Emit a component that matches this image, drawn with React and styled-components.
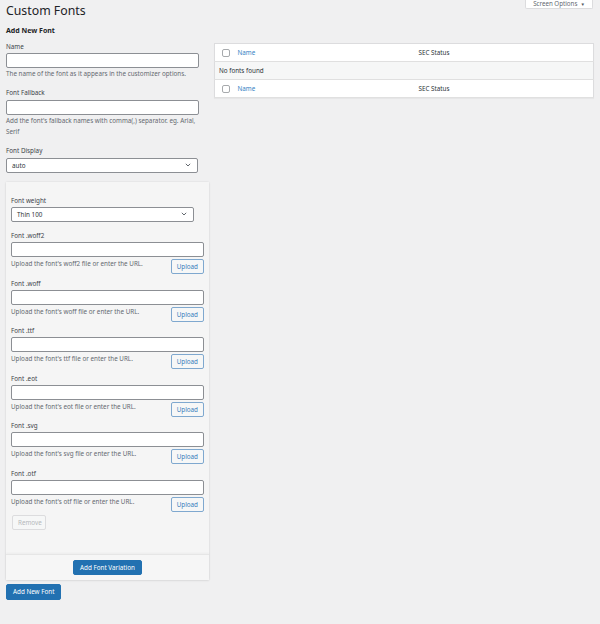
import React from 'react';
import styled, { createGlobalStyle } from 'styled-components';

const GlobalStyle = createGlobalStyle`
  html, body {
    margin: 0;
    padding: 0;
    background: #f0f0f1;
  }
  body {
    font-family: "Noto Sans", "Open Sans", sans-serif;
    font-size: 6.3px;
    color: #3c434a;
  }
  * {
    box-sizing: border-box;
  }
`;

const Page = styled.div`
  padding: 0 6px;
  min-height: 624px;
`;

const Header = styled.div`
  display: flex;
  justify-content: space-between;
  align-items: flex-start;
  height: 22px;
`;

const Title = styled.h1`
  margin: 0;
  font-size: 12.3px;
  line-height: 22px;
  font-weight: 400;
  color: #1d2327;
`;

const ScreenTab = styled.div`
  display: flex;
  align-items: flex-end;
  justify-content: center;
  gap: 3px;
  height: 9px;
  width: 68px;
  padding: 0 4px 1px;
  margin-right: 1px;
  background: #fff;
  border: 1px solid #dcdcde;
  border-top: none;
  border-radius: 0 0 2px 2px;
  color: #646970;
  font-size: 6.2px;
  line-height: 6px;
  white-space: nowrap;
  overflow: hidden;
`;

const Caret = styled.span`
  font-size: 4.5px;
  color: #50575e;
`;

const Columns = styled.div`
  display: flex;
  gap: 5px;
  align-items: flex-start;
`;

const LeftCol = styled.div`
  width: 203px;
  flex: none;
`;

const RightCol = styled.div`
  flex: 1;
  margin-top: 21px;
`;

const SectionTitle = styled.h2`
  margin: 3px 0 0;
  font-size: 7px;
  line-height: 12px;
  font-weight: 700;
  color: #1d2327;
`;

const Field = styled.div`
  margin-top: ${(p) => p.$top || 9}px;
`;

const Label = styled.label`
  display: block;
  line-height: 10px;
  color: #3c434a;
  margin-bottom: ${(p) => p.$gap || 1}px;
`;

const TextInput = styled.input`
  display: block;
  width: ${(p) => p.$width || 193}px;
  height: 15px;
  margin: 0;
  padding: 0 5px;
  background: #fff;
  border: 1px solid #8c8f94;
  border-radius: 2px;
  font: inherit;
  outline: none;
`;

const SelectBox = styled.div`
  display: flex;
  align-items: center;
  justify-content: space-between;
  width: ${(p) => p.$width || 192}px;
  height: 15px;
  padding: 0 6px 0 5px;
  background: #fff;
  border: 1px solid #8c8f94;
  border-radius: 2px;
  color: #2c3338;
`;

const Description = styled.p`
  margin: ${(p) => p.$top || 1}px 0 0;
  line-height: 10.3px;
  color: #646970;
`;

const Panel = styled.div`
  margin-top: 9px;
  background: #f5f5f5;
  box-shadow: 0 0 2px rgba(0, 0, 0, 0.1), 0 1px 2px rgba(0, 0, 0, 0.06);
`;

const PanelBody = styled.div`
  padding: 14px 5px 24px;
`;

const UploadGroup = styled.div`
  margin-top: ${(p) => p.$first ? 9.5 : 4.5}px;
`;

const UploadRow = styled.div`
  display: flex;
  justify-content: space-between;
  align-items: flex-start;
  margin-top: 2px;
  width: 193px;
`;

const UploadHint = styled.span`
  line-height: 10px;
  color: #646970;
`;

const SecondaryButton = styled.button`
  height: 15px;
  padding: 0 5px;
  margin: 0;
  background: #f6f7f7;
  border: 1px solid #7fa8cf;
  border-radius: 2px;
  color: #3a7dbb;
  font: inherit;
  line-height: 13px;
  cursor: pointer;
`;

const RemoveButton = styled(SecondaryButton)`
  margin-top: 3px;
  margin-left: 1px;
  width: 34px;
  border-color: #dcdcde;
  color: #b5b8bb;
  cursor: default;
`;

const PanelFooter = styled.div`
  display: flex;
  justify-content: center;
  padding: 5px 0;
  background: #f6f6f6;
  border-top: 1px solid #e6e6e6;
  box-shadow: 0 -1px 2px rgba(0, 0, 0, 0.04);
`;

const PrimaryButton = styled.button`
  height: ${(p) => p.$height || 15}px;
  padding: 0 6px;
  margin: 0;
  background: #2271b1;
  border: 1px solid #2271b1;
  border-radius: 2px;
  color: #fff;
  font: inherit;
  cursor: pointer;
`;

const SubmitWrap = styled.div`
  margin-top: 4px;
`;

const Table = styled.table`
  width: 100%;
  border-collapse: collapse;
  background: #fff;
  border: 1px solid #dcdcde;
  box-shadow: 0 1px 1px rgba(0, 0, 0, 0.04);
`;

const Row = styled.tr`
  height: 18px;
  background: ${(p) => p.$striped ? '#f6f7f7' : '#fff'};
  border-bottom: 1px solid #e0e0e0;
`;

const CheckCell = styled.td`
  width: 23px;
  padding: 0 0 0 7px;
  vertical-align: middle;
`;

const Cell = styled.td`
  padding: 0 0 0 ${(p) => p.$pad || 0}px;
  width: ${(p) => p.$width ? `${p.$width}px` : 'auto'};
  vertical-align: middle;
  line-height: 10px;
  color: #2c3338;
`;

const Checkbox = styled.span`
  display: block;
  width: 8px;
  height: 8px;
  background: #fff;
  border: 1px solid #a7aaad;
  border-radius: 2px;
`;

const SortLink = styled.a`
  color: #3582c4;
  text-decoration: none;
`;

function Chevron() {
  return (
    <svg width="6" height="4" viewBox="0 0 6 4">
      <polyline points="0.8,0.8 3,3 5.2,0.8" fill="none" stroke="#50575e" strokeWidth="0.9" />
    </svg>
  );
}

function UploadField({ ext, first }) {
  return (
    <UploadGroup $first={first}>
      <Label>Font .{ext}</Label>
      <TextInput />
      <UploadRow>
        <UploadHint>Upload the font's {ext} file or enter the URL.</UploadHint>
        <SecondaryButton>Upload</SecondaryButton>
      </UploadRow>
    </UploadGroup>
  );
}

function HeadRow() {
  return (
    <Row>
      <CheckCell><Checkbox /></CheckCell>
      <Cell $width={181}><SortLink href="#">Name</SortLink></Cell>
      <Cell>SEC Status</Cell>
    </Row>
  );
}

const extensions = ['woff2', 'woff', 'ttf', 'eot', 'svg', 'otf'];

export default function App() {
  return (
    <>
      <GlobalStyle />
      <Page>
        <Header>
          <Title>Custom Fonts</Title>
          <ScreenTab>Screen Options <Caret>▼</Caret></ScreenTab>
        </Header>
        <Columns>
          <LeftCol>
            <SectionTitle>Add New Font</SectionTitle>
            <Field $top={5}>
              <Label>Name</Label>
              <TextInput />
              <Description>The name of the font as it appears in the customizer options.</Description>
            </Field>
            <Field>
              <Label $gap={2}>Font Fallback</Label>
              <TextInput />
              <Description>Add the font's fallback names with comma(,) separator. eg. Arial, Serif</Description>
            </Field>
            <Field $top={9}>
              <Label $gap={2}>Font Display</Label>
              <SelectBox>auto <Chevron /></SelectBox>
            </Field>
            <Panel>
              <PanelBody>
                <Label $gap={1}>Font weight</Label>
                <SelectBox $width={183}>Thin 100 <Chevron /></SelectBox>
                {extensions.map((ext, i) => (
                  <UploadField key={ext} ext={ext} first={i === 0} />
                ))}
                <RemoveButton disabled>Remove</RemoveButton>
              </PanelBody>
              <PanelFooter>
                <PrimaryButton>Add Font Variation</PrimaryButton>
              </PanelFooter>
            </Panel>
            <SubmitWrap>
              <PrimaryButton $height={16}>Add New Font</PrimaryButton>
            </SubmitWrap>
          </LeftCol>
          <RightCol>
            <Table>
              <tbody>
                <HeadRow />
                <Row $striped>
                  <Cell $pad={4} colSpan={3}>No fonts found</Cell>
                </Row>
                <HeadRow />
              </tbody>
            </Table>
          </RightCol>
        </Columns>
      </Page>
    </>
  );
}
